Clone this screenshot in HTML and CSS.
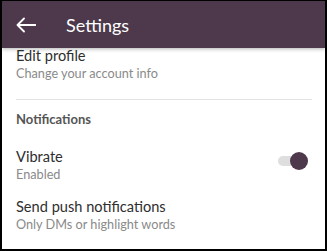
FILE: index.html
```html
<!DOCTYPE html>
<html lang="en">
  <head>
    <meta charset="UTF-8" />
    <meta name="viewport" content="width=device-width, initial-scale=1.0" />
    <title>Settings</title>
    <link rel="stylesheet" href="styles.css">
  </head>
  <body>
    <div class="frame">
      <header class="app-bar">
        <svg class="back" width="20" height="16" viewBox="0 0 20 16">
          <path d="M19.5 8H1.5M8 1.5L1.5 8L8 14.5" fill="none" stroke="#fff" stroke-width="1.8" stroke-linecap="round" stroke-linejoin="round" />
        </svg>
        <h1 class="title">Settings</h1>
      </header>
      <main class="content">
        <div class="list">
          <div class="item item-first">
            <div class="item-text">
              <div class="item-title">Edit profile</div>
              <div class="item-sub">Change your account info</div>
            </div>
          </div>
          <hr class="divider" />
          <div class="section">Notifications</div>
          <div class="item item-toggle">
            <div class="item-text">
              <div class="item-title">Vibrate</div>
              <div class="item-sub">Enabled</div>
            </div>
            <div class="toggle on">
              <span class="track"></span>
              <span class="knob"></span>
            </div>
          </div>
          <div class="item">
            <div class="item-text">
              <div class="item-title">Send push notifications</div>
              <div class="item-sub">Only DMs or highlight words</div>
            </div>
          </div>
        </div>
      </main>
    </div>
  </body>
</html>
```

FILE: styles.css
```css
body {
  margin: 0;
  background-color: #000;
}
.frame {
  width: 327px;
  height: 251px;
  box-sizing: border-box;
  border: 2px solid #000;
  border-top-width: 1px;
  background-color: #fff;
  display: flex;
  flex-direction: column;
  overflow: hidden;
  font-family: Lato, 'Open Sans', sans-serif;
}
.app-bar {
  position: relative;
  z-index: 1;
  height: 47px;
  flex: none;
  background-color: #4d394b;
  box-shadow: 0 1px 4px rgba(0, 0, 0, 0.3);
  display: flex;
  align-items: center;
  padding-left: 14px;
}
.back {
  display: block;
  margin-right: 30px;
}
.title {
  margin: 0;
  font-size: 18px;
  font-weight: 400;
  color: #fff;
  line-height: 22px;
}
.content {
  flex: 1;
  overflow: hidden;
}
.list {
  margin-top: -1px;
}
.item {
  display: flex;
  align-items: flex-start;
  padding: 8px 17px 8px 14px;
}
.item-first {
  padding-top: 0;
  padding-bottom: 18px;
}
.item-text {
  flex: 1;
}
.item-title {
  font-size: 14.6px;
  line-height: 18px;
  color: #2e2e2e;
}
.item-sub {
  font-size: 12.7px;
  line-height: 16px;
  color: #8a8a8a;
}
.divider {
  margin: 0 13px 0 14px;
  border: none;
  border-top: 1px solid #e3e3e3;
}
.section {
  padding: 11px 14px 13px;
  font-size: 13px;
  line-height: 16px;
  font-weight: 700;
  color: #555;
}
.toggle {
  position: relative;
  width: 30px;
  height: 18px;
  margin-top: 4px;
}
.track {
  position: absolute;
  left: 0;
  top: 4px;
  width: 26px;
  height: 10px;
  border-radius: 5px;
  background-color: #dedede;
}
.knob {
  position: absolute;
  right: 0;
  top: 0;
  width: 18px;
  height: 18px;
  border-radius: 50%;
  background-color: #4d394b;
}
```
